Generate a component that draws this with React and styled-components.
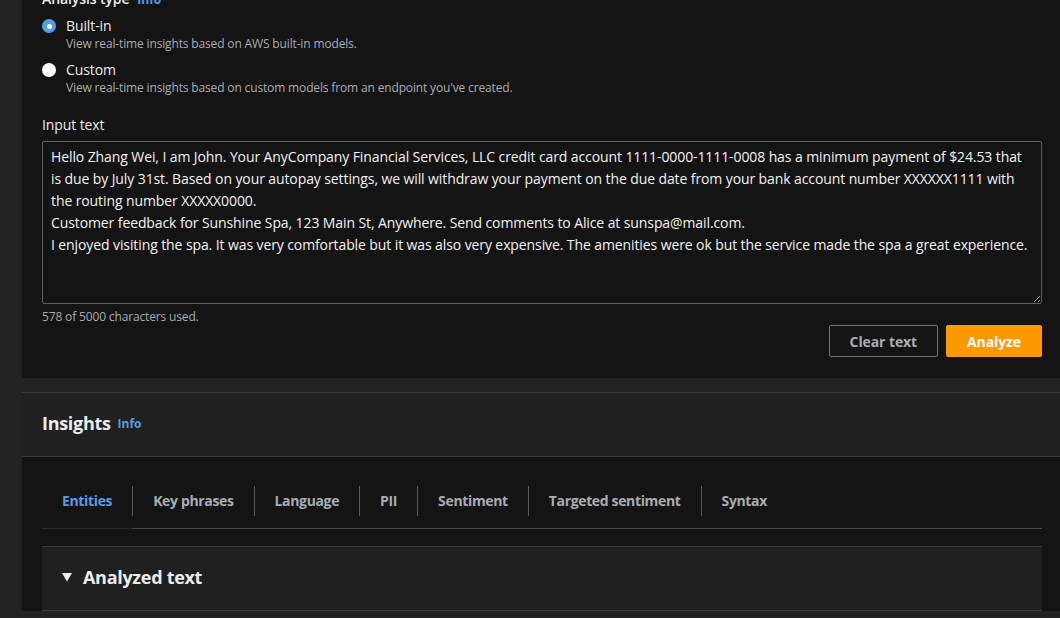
import React from "react";
import styled, { createGlobalStyle } from "styled-components";

const Global = createGlobalStyle`
  html, body { margin: 0; padding: 0; background: #222222; overflow: hidden; }
  body { font-family: "Open Sans", "Noto Sans", sans-serif; color: #eaeded; }
  * { box-sizing: border-box; }
`;

const Page = styled.div`
  width: 1062px;
  padding-left: 22px;
  display: flex;
  flex-direction: column;
  gap: 14px;
`;

const Panel = styled.section`
  background: #141414;
  padding: 0 20px 21px;
  display: flex;
  flex-direction: column;
`;

const FieldLabel = styled.div`
  font-size: 14px;
  line-height: 20px;
  font-weight: ${(p) => p.$weight || 400};
  color: #eaeded;
  letter-spacing: -0.1px;
  margin-top: ${(p) => p.$mt || 0}px;
  display: flex;
  align-items: baseline;
  gap: 8px;
`;

const InfoLink = styled.span`
  color: #539fe5;
  font-size: 12px;
  font-weight: 700;
  letter-spacing: 0;
`;

const RadioGroup = styled.div`
  display: flex;
  flex-direction: column;
  gap: 8px;
  margin-top: 6px;
`;

const RadioRow = styled.label`
  display: grid;
  grid-template-columns: 14px 1fr;
  column-gap: 10px;
  align-items: center;
`;

const RadioDot = styled.span`
  width: 14px;
  height: 14px;
  border-radius: 50%;
  background: ${(p) => (p.$checked ? "#539fe5" : "#ffffff")};
  display: flex;
  align-items: center;
  justify-content: center;
  &::after {
    content: "";
    width: 5px;
    height: 5px;
    border-radius: 50%;
    background: #ffffff;
    display: ${(p) => (p.$checked ? "block" : "none")};
  }
`;

const RadioLabel = styled.span`
  font-size: 14px;
  line-height: 20px;
  color: #eaeded;
  letter-spacing: -0.1px;
`;

const RadioDesc = styled.span`
  grid-column: 2;
  font-size: 12px;
  line-height: 16px;
  color: #a8adb3;
  letter-spacing: -0.15px;
`;

const TextArea = styled.textarea`
  display: block;
  width: 1000px;
  height: 163px;
  margin-top: 6px;
  background: #141414;
  border: 1px solid #5f5f5f;
  border-radius: 2px;
  color: #f2f3f3;
  font-family: "Open Sans", "Noto Sans", sans-serif;
  font-size: 14px;
  line-height: 22px;
  letter-spacing: -0.1px;
  padding: 4px 8px 3px;
  resize: vertical;
  outline: none;
  overflow: hidden;
`;

const Hint = styled.div`
  font-size: 12px;
  line-height: 16px;
  color: #a8adb3;
  margin-top: 5px;
  letter-spacing: -0.15px;
`;

const Actions = styled.div`
  display: flex;
  justify-content: flex-end;
  gap: 8px;
`;

const Button = styled.button`
  height: 32px;
  padding: 0 20px;
  font-family: "Open Sans", "Noto Sans", sans-serif;
  font-size: 14px;
  font-weight: 700;
  border-radius: 2px;
  cursor: pointer;
  letter-spacing: -0.1px;
  border: 1px solid ${(p) => (p.$primary ? "#ff9900" : "#6f7377")};
  background: ${(p) => (p.$primary ? "#ff9900" : "transparent")};
  color: ${(p) => (p.$primary ? "#ffffff" : "#a8adb3")};
`;

const Insights = styled.section`
  background: #141414;
  border-top: 1px solid #3a3a3a;
`;

const InsightsHeader = styled.header`
  background: #202020;
  height: 64px;
  padding: 0 20px 3px;
  display: flex;
  align-items: center;
  gap: 7px;
  border-bottom: 1px solid #3a3a3a;
`;

const Title = styled.h2`
  margin: 0;
  font-size: 18px;
  font-weight: 700;
  color: #eaeded;
  letter-spacing: -0.3px;
`;

const InsightsBody = styled.div`
  padding: 18px 20px 0;
`;

const TabList = styled.div`
  display: flex;
  align-items: center;
  height: 54px;
  padding-bottom: 2px;
  border-bottom: 1px solid #4a4a4a;
`;

const Tab = styled.div`
  position: relative;
  height: 100%;
  display: flex;
  align-items: center;
  padding: 0 20px;
  font-size: 14px;
  font-weight: 700;
  letter-spacing: -0.35px;
  color: ${(p) => (p.$active ? "#539fe5" : "#a8adb3")};
  ${(p) =>
    p.$active &&
    `&::after {
      content: "";
      position: absolute;
      left: 0; right: 0; bottom: -3px;
      height: 1px;
      background: #1f2a36;
    }`}
`;

const TabDivider = styled.span`
  width: 1px;
  height: 30px;
  background: #5a5a5a;
  flex: none;
`;

const Expandable = styled.div`
  margin-top: 17px;
  background: #202020;
  border-top: 1px solid #3a3a3a;
  border-bottom: 1px solid #3a3a3a;
  height: 65px;
  padding: 0 20px 3px;
  display: flex;
  align-items: center;
  gap: 11px;
`;

const Caret = styled.svg`
  width: 10px;
  height: 9px;
  flex: none;
`;

const tabs = [
  "Entities",
  "Key phrases",
  "Language",
  "PII",
  "Sentiment",
  "Targeted sentiment",
  "Syntax",
];

const sample =
  "Hello Zhang Wei, I am John. Your AnyCompany Financial Services, LLC credit card account 1111-0000-1111-0008 has a minimum payment of $24.53 that is due by July 31st. Based on your autopay settings, we will withdraw your payment on the due date from your bank account number XXXXXX1111 with the routing number XXXXX0000.\nCustomer feedback for Sunshine Spa, 123 Main St, Anywhere. Send comments to Alice at sunspa@mail.com.\nI enjoyed visiting the spa. It was very comfortable but it was also very expensive. The amenities were ok but the service made the spa a great experience.";

export default function App() {
  return (
    <>
      <Global />
      <Page>
        <Panel>
          <FieldLabel $mt={-11} $weight={600}>
            Analysis type <InfoLink>Info</InfoLink>
          </FieldLabel>
          <RadioGroup>
            <RadioRow>
              <RadioDot $checked />
              <RadioLabel>Built-in</RadioLabel>
              <RadioDesc>View real-time insights based on AWS built-in models.</RadioDesc>
            </RadioRow>
            <RadioRow>
              <RadioDot />
              <RadioLabel>Custom</RadioLabel>
              <RadioDesc>
                View real-time insights based on custom models from an endpoint you've created.
              </RadioDesc>
            </RadioRow>
          </RadioGroup>
          <FieldLabel $mt={19}>Input text</FieldLabel>
          <TextArea defaultValue={sample} spellCheck={false} />
          <Hint>578 of 5000 characters used.</Hint>
          <Actions>
            <Button>Clear text</Button>
            <Button $primary>Analyze</Button>
          </Actions>
        </Panel>
        <Insights>
          <InsightsHeader>
            <Title>Insights</Title>
            <InfoLink>Info</InfoLink>
          </InsightsHeader>
          <InsightsBody>
            <TabList>
              {tabs.map((t, i) => (
                <React.Fragment key={t}>
                  {i > 0 && <TabDivider />}
                  <Tab $active={i === 0}>{t}</Tab>
                </React.Fragment>
              ))}
            </TabList>
            <Expandable>
              <Caret viewBox="0 0 10 9">
                <path d="M0 0 L10 0 L5 8.5 Z" fill="#eaeded" />
              </Caret>
              <Title>Analyzed text</Title>
            </Expandable>
          </InsightsBody>
        </Insights>
      </Page>
    </>
  );
}
